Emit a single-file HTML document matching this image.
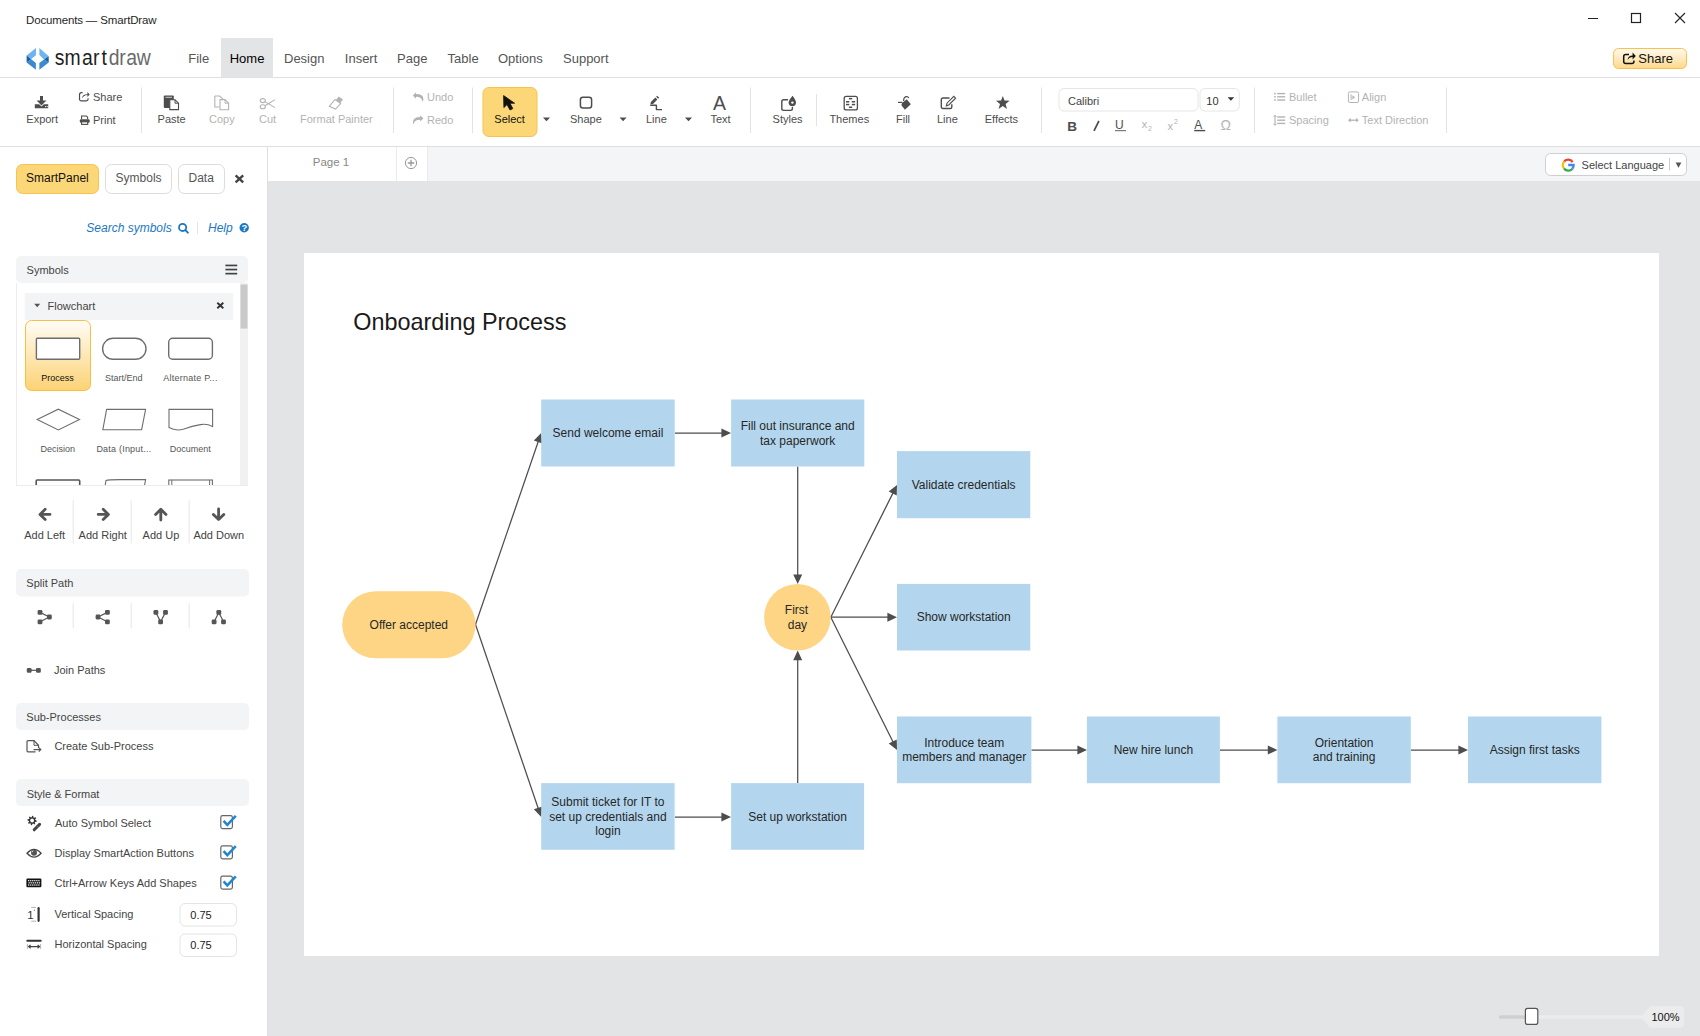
<!DOCTYPE html><html><head><meta charset="utf-8"><style>html,body{margin:0;padding:0;background:#fff;overflow:hidden}svg{display:block}text{font-family:"Liberation Sans",sans-serif}</style></head><body><svg width="1700" height="1036" viewBox="0 0 1700 1036"><rect x="0" y="0" width="1700" height="1036" fill="#ffffff" stroke="none" stroke-width="1" rx="0" />
<rect x="268" y="181" width="1432" height="855" fill="#e3e4e6" stroke="none" stroke-width="1" rx="0" />
<rect x="268" y="147" width="1432" height="34" fill="#f4f5f6" stroke="none" stroke-width="1" rx="0" />
<rect x="268" y="147" width="128" height="34" fill="#ffffff" stroke="none" stroke-width="1" rx="0" />
<rect x="397" y="147" width="30" height="34" fill="#ffffff" stroke="none" stroke-width="1" rx="0" />
<line x1="396.5" y1="147" x2="396.5" y2="181" stroke="#e9eaeb" stroke-width="1" />
<line x1="427.5" y1="147" x2="427.5" y2="181" stroke="#e9eaeb" stroke-width="1" />
<rect x="304" y="253" width="1355" height="703" fill="#ffffff" stroke="none" stroke-width="1" rx="0" />
<line x1="0" y1="77.5" x2="1700" y2="77.5" stroke="#dedfe0" stroke-width="1" />
<line x1="0" y1="146.5" x2="1700" y2="146.5" stroke="#dedfe0" stroke-width="1" />
<line x1="267.5" y1="147" x2="267.5" y2="1036" stroke="#dedfe0" stroke-width="1" />
<text x="26" y="24" font-size="11.5" fill="#1f1f1f" letter-spacing="-0.15" >Documents — SmartDraw</text>
<line x1="1588" y1="18.5" x2="1598" y2="18.5" stroke="#222" stroke-width="1" />
<rect x="1631.5" y="13.5" width="9" height="9" fill="none" stroke="#222" stroke-width="1.2" rx="0" />
<path d="M1675 13 L1685 23 M1685 13 L1675 23" fill="none" stroke="#222" stroke-width="1.1" />
<g>
<path d="M36.0 48.1 L26.6 55.6 L31.3 59.1 L35.9 55.3 Z" fill="#6db4f2" stroke="none" stroke-width="1" />
<path d="M26.6 55.6 L26.6 62.5 L31.3 59.2 Z" fill="#1b5c9e" stroke="none" stroke-width="1" />
<path d="M26.6 62.5 L35.9 69.8 L35.9 63.1 L31.3 59.2 Z" fill="#3a8ad0" stroke="none" stroke-width="1" />
<path d="M39.4 48.1 L48.7 56.2 L44.0 59.4 L39.4 55.0 Z" fill="#6db4f2" stroke="none" stroke-width="1" />
<path d="M48.7 56.2 L48.7 62.5 L44.0 59.4 Z" fill="#1b5c9e" stroke="none" stroke-width="1" />
<path d="M48.7 62.5 L39.4 69.8 L39.4 63.1 L44.0 59.4 Z" fill="#3a8ad0" stroke="none" stroke-width="1" />
</g>
<g transform="scale(0.88,1)"><text x="62.27 73.41 93.07 105.68 115.28" y="64.7" font-size="22" fill="#1e1e1e">smart</text>
<text x="123.68 135.57 143.41 155.53" y="64.7" font-size="22" fill="#6a6a6a">draw</text></g>
<rect x="221" y="38" width="52" height="39.5" fill="#e3e4e6" stroke="none" stroke-width="1" rx="0" />
<text x="188.2" y="63.2" font-size="13" fill="#555" >File</text>
<text x="229.7" y="63.2" font-size="13" fill="#000" >Home</text>
<text x="284.0" y="63.2" font-size="13" fill="#555" >Design</text>
<text x="344.8" y="63.2" font-size="13" fill="#555" >Insert</text>
<text x="397.09999999999997" y="63.2" font-size="13" fill="#555" >Page</text>
<text x="447.59999999999997" y="63.2" font-size="13" fill="#555" >Table</text>
<text x="498.0" y="63.2" font-size="13" fill="#555" >Options</text>
<text x="563.0" y="63.2" font-size="13" fill="#555" >Support</text>
<defs><linearGradient id="shg" x1="0" y1="0" x2="0" y2="1"><stop offset="0" stop-color="#fffaf0"/><stop offset="1" stop-color="#fcd98a"/></linearGradient><linearGradient id="procg" x1="0" y1="0" x2="0" y2="1"><stop offset="0" stop-color="#fffdf7"/><stop offset="1" stop-color="#fcd274"/></linearGradient></defs>
<rect x="1613.5" y="48.5" width="73" height="20" fill="url(#shg)" stroke="#f8c14e" stroke-width="1" rx="5" />
<text x="1638.3" y="63.3" font-size="13" fill="#111" >Share</text>
<line x1="141.5" y1="87.5" x2="141.5" y2="133" stroke="#e3e3e3" stroke-width="1" />
<line x1="393.5" y1="87.5" x2="393.5" y2="133" stroke="#e3e3e3" stroke-width="1" />
<line x1="472.5" y1="87.5" x2="472.5" y2="133" stroke="#e3e3e3" stroke-width="1" />
<line x1="750.5" y1="87.5" x2="750.5" y2="133" stroke="#e3e3e3" stroke-width="1" />
<line x1="1041.5" y1="87.5" x2="1041.5" y2="133" stroke="#e3e3e3" stroke-width="1" />
<line x1="1254.5" y1="87.5" x2="1254.5" y2="133" stroke="#e3e3e3" stroke-width="1" />
<line x1="1446.5" y1="87.5" x2="1446.5" y2="133" stroke="#e3e3e3" stroke-width="1" />
<line x1="816.5" y1="94" x2="816.5" y2="126" stroke="#e3e3e3" stroke-width="1" />
<text x="26.3" y="123.3" font-size="11" fill="#4d4d4d" >Export</text>
<path d="M40 96 h3 v4.6 h3.4 l-4.9 5 l-4.9 -5 h3.4 Z" fill="#4d4d4d" stroke="none" stroke-width="1" />
<path d="M34.8 104.2 h4.3 l2.4 2.4 l2.4 -2.4 h4.3 v4 h-13.4 Z" fill="#4d4d4d" stroke="none" stroke-width="1" />
<circle cx="45.6" cy="106.6" r="0.6" fill="#fff"/><circle cx="47.2" cy="106.6" r="0.6" fill="#fff"/>
<text x="93" y="100.8" font-size="11" fill="#4d4d4d" >Share</text>
<path d="M82.6 92.7 h-1.3 a1.8 1.8 0 0 0 -1.8 1.8 v4.6 a1.8 1.8 0 0 0 1.8 1.8 h5 a1.8 1.8 0 0 0 1.8 -1.8 v-0.8" fill="none" stroke="#4d4d4d" stroke-width="1.2" />
<path d="M82 98.6 q0 -4.4 5.4 -4.4 v-2.3 l2.3 2.6 l-2.3 2.6 v-2.2 q-3.6 0 -5.4 3.7 Z" fill="#4d4d4d" stroke="none" stroke-width="1" />
<text x="93" y="123.8" font-size="11" fill="#4d4d4d" >Print</text>
<path d="M81.6 119.2 v-3.2 h4.8 l1.2 1.2 v2" fill="none" stroke="#4d4d4d" stroke-width="1.1" />
<rect x="79.8" y="119.2" width="9.9" height="3.6" fill="#4d4d4d" stroke="none" stroke-width="1" rx="1.2" />
<rect x="81.6" y="121.8" width="6.1" height="2.6" fill="#fff" stroke="#4d4d4d" stroke-width="1.1" rx="0" />
<text x="157.6" y="123.3" font-size="11" fill="#4d4d4d" >Paste</text>
<rect x="163.8" y="95.6" width="10" height="12.4" fill="#4d4d4d" stroke="none" stroke-width="1" rx="1" />
<line x1="165.5" y1="97.3" x2="172" y2="97.3" stroke="#ddd" stroke-width="0.9" />
<path d="M169.8 99.7 h5.2 l3.5 3.5 v6.4 h-8.7 Z" fill="#fff" stroke="#4d4d4d" stroke-width="1.1" />
<path d="M175 99.7 v3.5 h3.5" fill="none" stroke="#4d4d4d" stroke-width="1" />
<text x="209" y="123.3" font-size="11" fill="#b3b3b3" >Copy</text>
<path d="M214.8 96 h5 l3.4 3.4 M214.8 96 v11 h4.5" fill="none" stroke="#b3b3b3" stroke-width="1.1" />
<path d="M214.8 96 l-0.01 0" fill="none" stroke="#b3b3b3" stroke-width="1" />
<path d="M220 99.6 h5 l3.6 3.6 v6.6 h-8.6 Z" fill="#fff" stroke="#b3b3b3" stroke-width="1.1" />
<path d="M225 99.6 v3.6 h3.6" fill="none" stroke="#b3b3b3" stroke-width="1" />
<text x="259" y="123.3" font-size="11" fill="#b3b3b3" >Cut</text>
<ellipse cx="262.8" cy="100.6" rx="2.6" ry="2" fill="none" stroke="#b3b3b3" stroke-width="1.1"/>
<ellipse cx="262.8" cy="106.8" rx="2.6" ry="2" fill="none" stroke="#b3b3b3" stroke-width="1.1"/>
<path d="M265 101.6 L275 107.6 M265 105.8 L275 99.6" fill="none" stroke="#b3b3b3" stroke-width="1.1" />
<text x="300" y="123.3" font-size="11" fill="#b3b3b3" >Format Painter</text>
<path d="M329.3 106.3 L335 99.5 L340.6 103.6 L335.6 109 Z" fill="none" stroke="#b3b3b3" stroke-width="1.1" />
<path d="M335.8 100 L338.8 96.6 L343 99.6 L340.3 103 Z" fill="#b3b3b3" stroke="none" stroke-width="1" />
<text x="427" y="100.8" font-size="11" fill="#b3b3b3" >Undo</text>
<text x="427" y="123.8" font-size="11" fill="#b3b3b3" >Redo</text>
<path d="M412.9 95.5 L415.9 92.3 V94.1 Q423.4 94.1 423.4 99 Q423.4 100.5 422.2 101.6 Q422 96.8 415.9 96.8 V98.7 Z" fill="#b3b3b3" stroke="none" stroke-width="1" />
<path d="M423.4 118.4 L420.2 115.2 V117 Q412.9 117 412.9 122.5 Q412.9 123.5 413.3 124.5 Q414 119.7 420.2 119.7 V121.6 Z" fill="#b3b3b3" stroke="none" stroke-width="1" />
<rect x="483" y="87.5" width="54" height="49" fill="#fcd778" stroke="#f8c24c" stroke-width="1" rx="6" />
<text x="494.3" y="123.3" font-size="11" fill="#111" >Select</text>
<path d="M503.6 95.6 L503.9 107.6 L507 104.6 L510 110 L512.8 108.6 L510 103.3 L514.6 103.2 Z" fill="#111" stroke="#111" stroke-width="0.8" stroke-linejoin="round"/>
<path d="M543 117.5 h7 l-3.5 3.8 Z" fill="#4d4d4d" stroke="none" stroke-width="1" />
<text x="570" y="123.3" font-size="11" fill="#4d4d4d" >Shape</text>
<rect x="580.4" y="97.3" width="11.2" height="10.6" fill="none" stroke="#4d4d4d" stroke-width="1.5" rx="2.5" />
<path d="M619.6 117.5 h7 l-3.5 3.8 Z" fill="#4d4d4d" stroke="none" stroke-width="1" />
<text x="646" y="123.3" font-size="11" fill="#4d4d4d" >Line</text>
<path d="M650.4 104.2 L650.9 101.9 L655.3 97.5 L657.4 99.6 L653 104 Z" fill="#4d4d4d" stroke="none" stroke-width="1" />
<path d="M656.1 96.7 L657.1 95.7 L659.2 97.8 L658.2 98.8 Z" fill="#4d4d4d" stroke="none" stroke-width="1" />
<path d="M650.2 105.3 H656.4 V109.6 H662" fill="none" stroke="#4d4d4d" stroke-width="1.4" stroke-linejoin="round"/>
<path d="M685 117.5 h7 l-3.5 3.8 Z" fill="#4d4d4d" stroke="none" stroke-width="1" />
<text x="710.5" y="123.3" font-size="11" fill="#4d4d4d" >Text</text>
<text x="713" y="110.3" font-size="19.5" fill="#4d4d4d" >A</text>
<text x="772.6" y="123.3" font-size="11" fill="#4d4d4d" >Styles</text>
<path d="M788 99.8 h-4.4 a1.8 1.8 0 0 0 -1.8 1.8 v7 a1.8 1.8 0 0 0 1.8 1.8 h7 a1.8 1.8 0 0 0 1.8 -1.8 v-1.8" fill="none" stroke="#4d4d4d" stroke-width="1.4" />
<path d="M792.6 95.8 q-4 4.8 -4 6.6 a3.7 3.7 0 0 0 7.4 0 q0 -1.8 -3.4 -6.6 Z" fill="#4d4d4d" stroke="none" stroke-width="1" />
<circle cx="792.4" cy="102.6" r="1.2" fill="#fff"/>
<text x="829.4" y="123.3" font-size="11" fill="#4d4d4d" >Themes</text>
<rect x="844.2" y="96.3" width="13.2" height="13.6" fill="none" stroke="#4d4d4d" stroke-width="1.3" rx="2" />
<rect x="848.9" y="97.9" width="3.3" height="1.5" fill="#4d4d4d" stroke="none" stroke-width="1" rx="0" />
<rect x="846" y="101" width="3.3" height="1.5" fill="#4d4d4d" stroke="none" stroke-width="1" rx="0" />
<rect x="851.8" y="101" width="3.3" height="1.5" fill="#4d4d4d" stroke="none" stroke-width="1" rx="0" />
<rect x="846" y="103.8" width="3.3" height="1.5" fill="#4d4d4d" stroke="none" stroke-width="1" rx="0" />
<rect x="851.8" y="103.8" width="3.3" height="1.5" fill="#4d4d4d" stroke="none" stroke-width="1" rx="0" />
<rect x="848.9" y="106.5" width="3.3" height="1.5" fill="#4d4d4d" stroke="none" stroke-width="1" rx="0" />
<text x="896" y="123.3" font-size="11" fill="#4d4d4d" >Fill</text>
<path d="M902 102.9 L906.8 99.2 L910.8 104.3 L904.9 109.7 L901.4 105.2 Z" fill="#4d4d4d" stroke="none" stroke-width="1" />
<path d="M903.6 101 Q903.6 96.4 907 96.6 Q908.4 96.8 908.8 98.2" fill="none" stroke="#4d4d4d" stroke-width="1.2" />
<path d="M898 102.4 H902.4" fill="none" stroke="#4d4d4d" stroke-width="1.2" />
<text x="937" y="123.3" font-size="11" fill="#4d4d4d" >Line</text>
<path d="M949.5 98 h-6.6 a1.6 1.6 0 0 0 -1.6 1.6 v7.3 a1.6 1.6 0 0 0 1.6 1.6 h7.3 a1.6 1.6 0 0 0 1.6 -1.6 v-2.6" fill="none" stroke="#4d4d4d" stroke-width="1.4" />
<path d="M946.3 105.8 L947 103.2 L953.8 96.4 L955.6 98.2 L948.8 105 Z" fill="#fff" stroke="#4d4d4d" stroke-width="1.1" />
<text x="984.7" y="123.3" font-size="11" fill="#4d4d4d" >Effects</text>
<path d="M1002.8 95.9 L1004.5 100.6 L1009.6 100.8 L1005.6 103.9 L1007 108.9 L1002.8 106 L998.6 108.9 L1000 103.9 L996 100.8 L1001.1 100.6 Z" fill="#4d4d4d" stroke="none" stroke-width="1" />
<rect x="1059" y="88.5" width="139" height="22.5" fill="#fff" stroke="#e6e6e6" stroke-width="1" rx="5" />
<rect x="1200" y="88.5" width="39.3" height="22.5" fill="#fff" stroke="#e6e6e6" stroke-width="1" rx="5" />
<text x="1068" y="104.6" font-size="11" fill="#444" >Calibri</text>
<text x="1206.3" y="104.6" font-size="11" fill="#333" >10</text>
<path d="M1227.6 97.3 h6.6 l-3.3 3.5 Z" fill="#333" stroke="none" stroke-width="1" />
<text x="1067.3" y="130.5" font-size="13.5" fill="#4d4d4d" font-weight="bold" >B</text>
<path d="M1098.9 121 L1094 130.9" fill="none" stroke="#4d4d4d" stroke-width="1.7" />
<text x="1115" y="128.6" font-size="12" fill="#4d4d4d" >U</text>
<line x1="1115" y1="130.7" x2="1126" y2="130.7" stroke="#4d4d4d" stroke-width="0.9" />
<text x="1141.8" y="128.4" font-size="11" fill="#b3b3b3" >x</text>
<text x="1148" y="130.6" font-size="7" fill="#b3b3b3" >2</text>
<text x="1167.5" y="130" font-size="11" fill="#b3b3b3" >x</text>
<text x="1174" y="124.3" font-size="7" fill="#b3b3b3" >2</text>
<text x="1194.3" y="128.6" font-size="12" fill="#4d4d4d" >A</text>
<line x1="1194.2" y1="130.6" x2="1205.2" y2="130.6" stroke="#4d4d4d" stroke-width="1.4" />
<text x="1220.5" y="130" font-size="14" fill="#b3b3b3" >Ω</text>
<text x="1289" y="101" font-size="11" fill="#b3b3b3" >Bullet</text>
<text x="1361.8" y="101" font-size="11" fill="#b3b3b3" >Align</text>
<text x="1289" y="123.9" font-size="11" fill="#b3b3b3" >Spacing</text>
<text x="1361.8" y="123.9" font-size="11" fill="#b3b3b3" >Text Direction</text>
<rect x="1274.2" y="92.8" width="1.6" height="1.6" fill="#b3b3b3" stroke="none" stroke-width="1" rx="0" />
<rect x="1277.2" y="92.89999999999999" width="8" height="1.4" fill="#b3b3b3" stroke="none" stroke-width="1" rx="0" />
<rect x="1274.2" y="96.0" width="1.6" height="1.6" fill="#b3b3b3" stroke="none" stroke-width="1" rx="0" />
<rect x="1277.2" y="96.1" width="8" height="1.4" fill="#b3b3b3" stroke="none" stroke-width="1" rx="0" />
<rect x="1274.2" y="99.2" width="1.6" height="1.6" fill="#b3b3b3" stroke="none" stroke-width="1" rx="0" />
<rect x="1277.2" y="99.3" width="8" height="1.4" fill="#b3b3b3" stroke="none" stroke-width="1" rx="0" />
<rect x="1348.4" y="91.9" width="10.2" height="10.6" fill="none" stroke="#b3b3b3" stroke-width="1" rx="1.5" />
<rect x="1350.6" y="94.3" width="1" height="5.8" fill="#b3b3b3" stroke="none" stroke-width="1" rx="0" />
<path d="M1352.4 95.2 v4.2 l2.6 -2.1 Z" fill="#b3b3b3" stroke="none" stroke-width="1" />
<rect x="1277.2" y="116.3" width="8" height="1.4" fill="#b3b3b3" stroke="none" stroke-width="1" rx="0" />
<rect x="1277.2" y="119.5" width="8" height="1.4" fill="#b3b3b3" stroke="none" stroke-width="1" rx="0" />
<rect x="1277.2" y="122.7" width="8" height="1.4" fill="#b3b3b3" stroke="none" stroke-width="1" rx="0" />
<path d="M1275 115.6 v9.4" fill="none" stroke="#b3b3b3" stroke-width="1.2" />
<path d="M1273.6 116.8 l1.4 -1.6 l1.4 1.6 M1273.6 123.8 l1.4 1.6 l1.4 -1.6" fill="none" stroke="#b3b3b3" stroke-width="1" />
<path d="M1349.6 120.2 h7.6" fill="none" stroke="#b3b3b3" stroke-width="1.3" />
<path d="M1348 120.2 l2.6 -2.4 v4.8 Z M1358.8 120.2 l-2.6 -2.4 v4.8 Z" fill="#b3b3b3" stroke="none" stroke-width="1" />
<path d="M1629 54.6 h-3.3 a2 2 0 0 0 -2 2 v5 a2 2 0 0 0 2 2 h6.2 a2 2 0 0 0 2 -2 v-1.2" fill="none" stroke="#111" stroke-width="1.5" />
<path d="M1627.6 60 q0.3 -4.6 5 -4.6 v-2.8 l3.2 3.5 l-3.2 3.5 v-2.6 q-3.3 0 -5 3 Z" fill="#111" stroke="none" stroke-width="1" />
<rect x="16.5" y="164.5" width="82" height="29" fill="#fcd778" stroke="#f8c24c" stroke-width="1" rx="6" />
<text x="26.1" y="182" font-size="12" fill="#111" >SmartPanel</text>
<rect x="105.5" y="164.5" width="66" height="29" fill="#fff" stroke="#dcdcdc" stroke-width="1" rx="6" />
<text x="115.6" y="182" font-size="12" fill="#555" >Symbols</text>
<rect x="178.5" y="164.5" width="46" height="29" fill="#fff" stroke="#dcdcdc" stroke-width="1" rx="6" />
<text x="188.5" y="182" font-size="12" fill="#555" >Data</text>
<path d="M235.6 175.4 L243.2 182.4 M243.2 175.4 L235.6 182.4" fill="none" stroke="#444" stroke-width="2.4" />
<text x="86.3" y="232" font-size="12" fill="#1a78c2" font-style="italic" >Search symbols</text>
<circle cx="182.6" cy="227.4" r="3.6" fill="none" stroke="#1a78c2" stroke-width="1.8"/>
<path d="M185.3 230.1 L187.9 232.6" fill="none" stroke="#1a78c2" stroke-width="2" stroke-linecap="round"/>
<line x1="197.5" y1="222" x2="197.5" y2="234" stroke="#e3e3e3" stroke-width="1" />
<text x="208" y="232" font-size="12" fill="#1a78c2" font-style="italic" >Help</text>
<circle cx="244.2" cy="227.7" r="4.7" fill="#1a78c2"/>
<text x="244.3" y="231.3" font-size="9.5" fill="#fff" font-weight="bold" text-anchor="middle" >?</text>
<rect x="16" y="256" width="232" height="27" fill="#f3f4f5" stroke="none" stroke-width="1" rx="5" />
<text x="26.6" y="274.3" font-size="11" fill="#444" >Symbols</text>
<rect x="225.4" y="264.59999999999997" width="11.8" height="1.7" fill="#444" stroke="none" stroke-width="1" rx="0" />
<rect x="225.4" y="268.7" width="11.8" height="1.7" fill="#444" stroke="none" stroke-width="1" rx="0" />
<rect x="225.4" y="272.8" width="11.8" height="1.7" fill="#444" stroke="none" stroke-width="1" rx="0" />
<line x1="16.5" y1="283" x2="16.5" y2="485" stroke="#ececec" stroke-width="1" />
<line x1="16" y1="485.5" x2="248" y2="485.5" stroke="#ececec" stroke-width="1" />
<rect x="240" y="283" width="8" height="202" fill="#f1f1f1" stroke="none" stroke-width="1" rx="0" />
<rect x="240.5" y="284.6" width="7" height="44" fill="#c9c9c9" stroke="none" stroke-width="1" rx="0" />
<rect x="24.7" y="293" width="208.5" height="27" fill="#f3f4f5" stroke="none" stroke-width="1" rx="0" />
<path d="M34.2 303.7 h6 l-3 3.6 Z" fill="#555" stroke="none" stroke-width="1" />
<text x="47.6" y="310.3" font-size="11" fill="#444" >Flowchart</text>
<path d="M217.3 302.8 L223.3 308.3 M223.3 302.8 L217.3 308.3" fill="none" stroke="#333" stroke-width="1.9" />
<rect x="25.5" y="320.5" width="65" height="70" fill="url(#procg)" stroke="#f9bf45" stroke-width="1" rx="6" />
<rect x="36.4" y="338.3" width="43.3" height="21" fill="#fff" stroke="#6e6e6e" stroke-width="1.4" rx="1" />
<rect x="102.6" y="338.3" width="43.4" height="21" fill="#fff" stroke="#6e6e6e" stroke-width="1.4" rx="10.5" />
<rect x="168.7" y="338.3" width="43.7" height="21" fill="#fff" stroke="#6e6e6e" stroke-width="1.4" rx="4" />
<text x="41.3" y="380.9" font-size="9" fill="#111" >Process</text>
<text x="105" y="380.9" font-size="9" fill="#555" >Start/End</text>
<text x="163.2" y="380.9" font-size="9" fill="#555" textLength="54.2">Alternate P...</text>
<path d="M37.2 419.5 L58.3 409.2 L79.5 419.5 L58.3 430 Z" fill="#fff" stroke="#6e6e6e" stroke-width="1.1" />
<path d="M106.6 409.4 L145.6 409.4 L141.6 429.8 L102.8 429.8 Z" fill="#fff" stroke="#6e6e6e" stroke-width="1.1" stroke-linejoin="round"/>
<path d="M169 409.4 H212.6 V426.6 Q207 423.4 200.5 424.6 Q192 426 184 429 Q176 431.4 169 427.6 Z" fill="#fff" stroke="#6e6e6e" stroke-width="1.1" />
<text x="40.5" y="452.4" font-size="9" fill="#555" >Decision</text>
<text x="96.4" y="452.4" font-size="9" fill="#555" textLength="54.8">Data (Input...</text>
<text x="169.7" y="452.4" font-size="9" fill="#555" >Document</text>
<clipPath id="lclip"><rect x="17" y="470" width="223" height="15"/></clipPath><g clip-path="url(#lclip)">
<rect x="36.2" y="480" width="43.5" height="22" fill="#fff" stroke="#555" stroke-width="1.6" rx="1" />
<path d="M106 480.4 Q108 479.6 120 479.6 H145.6 L141.8 500 H102.8 Z" fill="#fff" stroke="#6e6e6e" stroke-width="1.1" />
<rect x="168.8" y="480" width="43.6" height="21" fill="#fff" stroke="#6e6e6e" stroke-width="1.1" rx="0" />
<line x1="171.8" y1="480" x2="171.8" y2="500" stroke="#6e6e6e" stroke-width="1" />
<line x1="209.6" y1="480" x2="209.6" y2="500" stroke="#6e6e6e" stroke-width="1" />
</g>
<line x1="73.2" y1="500.3" x2="73.2" y2="543.4" stroke="#e6e6e6" stroke-width="1" />
<line x1="131.2" y1="500.3" x2="131.2" y2="543.4" stroke="#e6e6e6" stroke-width="1" />
<line x1="189.2" y1="500.3" x2="189.2" y2="543.4" stroke="#e6e6e6" stroke-width="1" />
<path d="M50 514.4 H40.2 M45.2 509.2 L40 514.4 L45.2 519.6" fill="none" stroke="#555" stroke-width="2.8" stroke-linejoin="round" stroke-linecap="round"/>
<path d="M98.2 514.4 H108.2 M103.2 509.2 L108.4 514.4 L103.2 519.6" fill="none" stroke="#555" stroke-width="2.8" stroke-linejoin="round" stroke-linecap="round"/>
<path d="M160.8 520 V509.4 M155.6 514.4 L160.8 509.2 L166 514.4" fill="none" stroke="#555" stroke-width="2.8" stroke-linejoin="round" stroke-linecap="round"/>
<path d="M218.6 508.8 V519.4 M213.4 514.4 L218.6 519.6 L223.8 514.4" fill="none" stroke="#555" stroke-width="2.8" stroke-linejoin="round" stroke-linecap="round"/>
<text x="24.2" y="538.5" font-size="11" fill="#444" >Add Left</text>
<text x="78.6" y="538.5" font-size="11" fill="#444" >Add Right</text>
<text x="142.6" y="538.5" font-size="11" fill="#444" >Add Up</text>
<text x="193.4" y="538.5" font-size="11" fill="#444" >Add Down</text>
<rect x="16" y="569" width="233" height="27.5" fill="#f3f4f5" stroke="none" stroke-width="1" rx="5" />
<text x="26.3" y="587.2" font-size="11" fill="#444" >Split Path</text>
<line x1="73.2" y1="603.3" x2="73.2" y2="628.3" stroke="#e6e6e6" stroke-width="1" />
<line x1="131.2" y1="603.3" x2="131.2" y2="628.3" stroke="#e6e6e6" stroke-width="1" />
<line x1="189.2" y1="603.3" x2="189.2" y2="628.3" stroke="#e6e6e6" stroke-width="1" />
<line x1="40" y1="612.4" x2="49.4" y2="617" stroke="#555" stroke-width="1.2" />
<line x1="40" y1="621.8" x2="49.4" y2="617" stroke="#555" stroke-width="1.2" />
<rect x="37.6" y="610.0" width="4.8" height="4.8" fill="#555" stroke="none" stroke-width="1" rx="1.3" />
<rect x="37.6" y="619.4" width="4.8" height="4.8" fill="#555" stroke="none" stroke-width="1" rx="1.3" />
<rect x="47.0" y="614.6" width="4.8" height="4.8" fill="#555" stroke="none" stroke-width="1" rx="1.3" />
<line x1="98" y1="617" x2="107.4" y2="612.4" stroke="#555" stroke-width="1.2" />
<line x1="98" y1="617" x2="107.4" y2="621.8" stroke="#555" stroke-width="1.2" />
<rect x="95.6" y="614.6" width="4.8" height="4.8" fill="#555" stroke="none" stroke-width="1" rx="1.3" />
<rect x="105.0" y="610.0" width="4.8" height="4.8" fill="#555" stroke="none" stroke-width="1" rx="1.3" />
<rect x="105.0" y="619.4" width="4.8" height="4.8" fill="#555" stroke="none" stroke-width="1" rx="1.3" />
<line x1="155.9" y1="612.4" x2="160.6" y2="621.8" stroke="#555" stroke-width="1.2" />
<line x1="165.5" y1="612.4" x2="160.6" y2="621.8" stroke="#555" stroke-width="1.2" />
<rect x="153.5" y="610.0" width="4.8" height="4.8" fill="#555" stroke="none" stroke-width="1" rx="1.3" />
<rect x="163.1" y="610.0" width="4.8" height="4.8" fill="#555" stroke="none" stroke-width="1" rx="1.3" />
<rect x="158.2" y="619.4" width="4.8" height="4.8" fill="#555" stroke="none" stroke-width="1" rx="1.3" />
<line x1="218.8" y1="612.4" x2="214.1" y2="621.8" stroke="#555" stroke-width="1.2" />
<line x1="218.8" y1="612.4" x2="223.5" y2="621.8" stroke="#555" stroke-width="1.2" />
<rect x="216.4" y="610.0" width="4.8" height="4.8" fill="#555" stroke="none" stroke-width="1" rx="1.3" />
<rect x="211.7" y="619.4" width="4.8" height="4.8" fill="#555" stroke="none" stroke-width="1" rx="1.3" />
<rect x="221.1" y="619.4" width="4.8" height="4.8" fill="#555" stroke="none" stroke-width="1" rx="1.3" />
<line x1="29.2" y1="670.3" x2="38.4" y2="670.3" stroke="#555" stroke-width="1.2" />
<rect x="26.8" y="667.9" width="4.8" height="4.8" fill="#555" stroke="none" stroke-width="1" rx="1.3" />
<rect x="36.0" y="667.9" width="4.8" height="4.8" fill="#555" stroke="none" stroke-width="1" rx="1.3" />
<text x="54" y="673.6" font-size="11" fill="#444" >Join Paths</text>
<rect x="16" y="703" width="233" height="27" fill="#f3f4f5" stroke="none" stroke-width="1" rx="5" />
<text x="26.3" y="720.6" font-size="11" fill="#444" >Sub-Processes</text>
<path d="M35.5 751.8 H28 a1 1 0 0 1 -1 -1 V741.6 a1 1 0 0 1 1 -1 H34 L38.5 745.3 V748" fill="none" stroke="#555" stroke-width="1.2" />
<path d="M34 740.6 V745.3 H38.5" fill="none" stroke="#555" stroke-width="1" />
<path d="M33.5 749.6 H40.6 M38.8 747.6 L40.8 749.6 L38.8 751.6" fill="none" stroke="#555" stroke-width="1.2" />
<text x="54.4" y="750.4" font-size="11" fill="#444" >Create Sub-Process</text>
<rect x="16" y="779" width="233" height="27" fill="#f3f4f5" stroke="none" stroke-width="1" rx="5" />
<text x="26.7" y="798" font-size="11" fill="#444" >Style &amp; Format</text>
<path d="M31.62 817.24 L32.33 815.81 L33.24 815.94 L33.51 817.52 L34.07 817.85 L35.58 817.34 L36.13 818.08 L35.21 819.39 L35.36 820.02 L36.79 820.73 L36.66 821.64 L35.08 821.91 L34.75 822.47 L35.26 823.98 L34.52 824.53 L33.21 823.61 L32.58 823.76 L31.87 825.19 L30.96 825.06 L30.69 823.48 L30.13 823.15 L28.62 823.66 L28.07 822.92 L28.99 821.61 L28.84 820.98 L27.41 820.27 L27.54 819.36 L29.12 819.09 L29.45 818.53 L28.94 817.02 L29.68 816.47 L30.99 817.39 Z" fill="#333" stroke="none" stroke-width="1" />
<circle cx="32.1" cy="820.5" r="1.9" fill="#fff"/>
<path d="M34.2 829.8 L39.6 824.4" fill="none" stroke="#444" stroke-width="3" stroke-linecap="round"/>
<path d="M37.6 826.4 L38.4 827.2" fill="none" stroke="#fff" stroke-width="0.5" />
<path d="M27 853.2 Q34 845.4 41.1 853.2 Q34 861 27 853.2 Z" fill="none" stroke="#444" stroke-width="1.3" />
<circle cx="34" cy="852.8" r="3" fill="#555"/>
<path d="M33 850.6 L32.2 852.2" fill="none" stroke="#eee" stroke-width="0.9" />
<rect x="26.4" y="878.5" width="15" height="8.8" fill="#111" stroke="none" stroke-width="1" rx="1.2" />
<rect x="28.0" y="880.0" width="1.3" height="1.3" fill="#e8e8e8" stroke="none" stroke-width="1" rx="0" />
<rect x="30.05" y="880.0" width="1.3" height="1.3" fill="#e8e8e8" stroke="none" stroke-width="1" rx="0" />
<rect x="32.1" y="880.0" width="1.3" height="1.3" fill="#e8e8e8" stroke="none" stroke-width="1" rx="0" />
<rect x="34.15" y="880.0" width="1.3" height="1.3" fill="#e8e8e8" stroke="none" stroke-width="1" rx="0" />
<rect x="36.2" y="880.0" width="1.3" height="1.3" fill="#e8e8e8" stroke="none" stroke-width="1" rx="0" />
<rect x="38.25" y="880.0" width="1.3" height="1.3" fill="#e8e8e8" stroke="none" stroke-width="1" rx="0" />
<rect x="28.5" y="882.2" width="1.3" height="1.3" fill="#e8e8e8" stroke="none" stroke-width="1" rx="0" />
<rect x="30.55" y="882.2" width="1.3" height="1.3" fill="#e8e8e8" stroke="none" stroke-width="1" rx="0" />
<rect x="32.6" y="882.2" width="1.3" height="1.3" fill="#e8e8e8" stroke="none" stroke-width="1" rx="0" />
<rect x="34.65" y="882.2" width="1.3" height="1.3" fill="#e8e8e8" stroke="none" stroke-width="1" rx="0" />
<rect x="36.7" y="882.2" width="1.3" height="1.3" fill="#e8e8e8" stroke="none" stroke-width="1" rx="0" />
<rect x="38.75" y="882.2" width="1.3" height="1.3" fill="#e8e8e8" stroke="none" stroke-width="1" rx="0" />
<rect x="28.0" y="884.4" width="1.3" height="1.3" fill="#e8e8e8" stroke="none" stroke-width="1" rx="0" />
<rect x="30.05" y="884.4" width="1.3" height="1.3" fill="#e8e8e8" stroke="none" stroke-width="1" rx="0" />
<rect x="32.1" y="884.4" width="1.3" height="1.3" fill="#e8e8e8" stroke="none" stroke-width="1" rx="0" />
<rect x="34.15" y="884.4" width="1.3" height="1.3" fill="#e8e8e8" stroke="none" stroke-width="1" rx="0" />
<rect x="36.2" y="884.4" width="1.3" height="1.3" fill="#e8e8e8" stroke="none" stroke-width="1" rx="0" />
<rect x="38.25" y="884.4" width="1.3" height="1.3" fill="#e8e8e8" stroke="none" stroke-width="1" rx="0" />
<text x="27.2" y="918.6" font-size="11.5" fill="#333" >1</text>
<line x1="38.6" y1="908.2" x2="38.6" y2="920.8" stroke="#333" stroke-width="2.2" stroke-linecap="round"/>
<line x1="31.2" y1="907.4" x2="36" y2="907.4" stroke="#aaa" stroke-width="0.9" />
<line x1="31.2" y1="921.2" x2="36" y2="921.2" stroke="#aaa" stroke-width="0.9" />
<rect x="33.8" y="909.6" width="1.2" height="1.2" fill="#888" stroke="none" stroke-width="1" rx="0" />
<line x1="27.3" y1="940.7" x2="40.7" y2="940.7" stroke="#333" stroke-width="2" stroke-linecap="round"/>
<path d="M28.6 946.6 H39.6 M30.6 945 L28.6 946.6 L30.6 948.2 M37.6 945 L39.6 946.6 L37.6 948.2" fill="none" stroke="#444" stroke-width="1.1" />
<line x1="27.4" y1="944" x2="27.4" y2="949" stroke="#999" stroke-width="0.7" />
<line x1="40.6" y1="944" x2="40.6" y2="949" stroke="#999" stroke-width="0.7" />
<text x="55" y="826.7" font-size="11" fill="#444" >Auto Symbol Select</text>
<text x="54.5" y="857.0" font-size="11" fill="#444" >Display SmartAction Buttons</text>
<text x="54.5" y="887.0" font-size="11" fill="#444" >Ctrl+Arrow Keys Add Shapes</text>
<text x="54.5" y="917.5" font-size="11" fill="#444" >Vertical Spacing</text>
<text x="54.5" y="947.8" font-size="11" fill="#444" >Horizontal Spacing</text>
<rect x="220.8" y="815.6" width="11.6" height="13" fill="#fff" stroke="#666" stroke-width="1.2" rx="1.8" />
<path d="M223.6 820.8 L227.3 824.8 L235.8 815.8" fill="none" stroke="#2286cf" stroke-width="2.6" stroke-linejoin="miter"/>
<rect x="220.8" y="845.9" width="11.6" height="13" fill="#fff" stroke="#666" stroke-width="1.2" rx="1.8" />
<path d="M223.6 851.0999999999999 L227.3 855.0999999999999 L235.8 846.0999999999999" fill="none" stroke="#2286cf" stroke-width="2.6" stroke-linejoin="miter"/>
<rect x="220.8" y="876.1" width="11.6" height="13" fill="#fff" stroke="#666" stroke-width="1.2" rx="1.8" />
<path d="M223.6 881.3 L227.3 885.3 L235.8 876.3" fill="none" stroke="#2286cf" stroke-width="2.6" stroke-linejoin="miter"/>
<rect x="180" y="903.5" width="56.5" height="22.5" fill="#fff" stroke="#e4e4e4" stroke-width="1" rx="5" />
<rect x="180" y="934" width="56.5" height="22.5" fill="#fff" stroke="#e4e4e4" stroke-width="1" rx="5" />
<text x="190.3" y="919" font-size="11" fill="#222" >0.75</text>
<text x="190.3" y="949.3" font-size="11" fill="#222" >0.75</text>
<text x="312.8" y="166.3" font-size="11.5" fill="#888" >Page 1</text>
<circle cx="411" cy="163" r="5.6" fill="none" stroke="#999" stroke-width="1"/>
<path d="M407.8 163 H414.2 M411 159.8 V166.2" fill="none" stroke="#999" stroke-width="1.3" />
<rect x="1545.5" y="153.5" width="141" height="22" fill="#fff" stroke="#cfcfcf" stroke-width="1" rx="5" />
<text x="1581.6" y="168.6" font-size="11" fill="#444" >Select Language</text>
<line x1="1669.5" y1="158" x2="1669.5" y2="170.5" stroke="#ccc" stroke-width="1" />
<path d="M1675.6 162.6 h5.8 l-2.9 5.2 Z" fill="#555" stroke="none" stroke-width="1" />
<g fill="none" stroke-width="2.3"><path d="M1572.6 162.1 A5.2 5.2 0 0 0 1564.2 161.6" stroke="#ea4335"/><path d="M1564.2 161.6 A5.2 5.2 0 0 0 1564.1 168.5" stroke="#fbbc05"/><path d="M1564.1 168.5 A5.2 5.2 0 0 0 1572.4 168.7" stroke="#34a853"/><path d="M1572.4 168.7 A5.2 5.2 0 0 0 1573.6 165 H1568.2" stroke="#4285f4"/></g>
<line x1="1500.5" y1="1017" x2="1532" y2="1017" stroke="#cfcfd0" stroke-width="3.4" stroke-linecap="round"/>
<line x1="1532" y1="1017" x2="1642" y2="1017" stroke="#ececed" stroke-width="3.4" />
<path d="M1641 1017 L1650 1006.3 H1680 a4 4 0 0 1 4 4 V1023.8 a4 4 0 0 1 -4 4 H1650 Z" fill="#ececed" stroke="none" stroke-width="1" />
<rect x="1525.4" y="1008.4" width="12.4" height="16" fill="#fff" stroke="#555" stroke-width="1.2" rx="2.2" />
<text x="1651.5" y="1021" font-size="11" fill="#111" >100%</text>
<text x="353.2" y="330.3" font-size="23.4" fill="#1a1a1a" >Onboarding Process</text>
<line x1="475.5" y1="624.5" x2="538.6038901053131" y2="440.56704786655325" stroke="#4d4d4d" stroke-width="1.25" />
<path d="M541.20 433.00 L542.34 443.54 L533.83 440.62 Z" fill="#4d4d4d" stroke="none" stroke-width="1" />
<line x1="475.5" y1="624.5" x2="538.6159660541966" y2="809.4288198696019" stroke="#4d4d4d" stroke-width="1.25" />
<path d="M541.20 817.00 L533.84 809.37 L542.36 806.46 Z" fill="#4d4d4d" stroke="none" stroke-width="1" />
<line x1="675" y1="433" x2="723.0" y2="433.0" stroke="#4d4d4d" stroke-width="1.25" />
<path d="M731.00 433.00 L721.40 437.50 L721.40 428.50 Z" fill="#4d4d4d" stroke="none" stroke-width="1" />
<line x1="797.7" y1="466.5" x2="797.7" y2="576.0" stroke="#4d4d4d" stroke-width="1.25" />
<path d="M797.70 584.00 L793.20 574.40 L802.20 574.40 Z" fill="#4d4d4d" stroke="none" stroke-width="1" />
<line x1="675" y1="817" x2="723.0" y2="817.0" stroke="#4d4d4d" stroke-width="1.25" />
<path d="M731.00 817.00 L721.40 821.50 L721.40 812.50 Z" fill="#4d4d4d" stroke="none" stroke-width="1" />
<line x1="797.7" y1="783" x2="797.7" y2="658.6" stroke="#4d4d4d" stroke-width="1.25" />
<path d="M797.70 650.60 L802.20 660.20 L793.20 660.20 Z" fill="#4d4d4d" stroke="none" stroke-width="1" />
<line x1="830.8" y1="617.2" x2="893.4179631452366" y2="492.15325184591717" stroke="#4d4d4d" stroke-width="1.25" />
<path d="M897.00 485.00 L896.73 495.60 L888.68 491.57 Z" fill="#4d4d4d" stroke="none" stroke-width="1" />
<line x1="830.8" y1="617.2" x2="889.0" y2="617.2" stroke="#4d4d4d" stroke-width="1.25" />
<path d="M897.00 617.20 L887.40 621.70 L887.40 612.70 Z" fill="#4d4d4d" stroke="none" stroke-width="1" />
<line x1="830.8" y1="617.2" x2="893.430920011011" y2="742.8402745840222" stroke="#4d4d4d" stroke-width="1.25" />
<path d="M897.00 750.00 L888.69 743.42 L896.74 739.40 Z" fill="#4d4d4d" stroke="none" stroke-width="1" />
<line x1="1031.4" y1="750" x2="1079.0" y2="750.0" stroke="#4d4d4d" stroke-width="1.25" />
<path d="M1087.00 750.00 L1077.40 754.50 L1077.40 745.50 Z" fill="#4d4d4d" stroke="none" stroke-width="1" />
<line x1="1220" y1="750" x2="1269.4" y2="750.0" stroke="#4d4d4d" stroke-width="1.25" />
<path d="M1277.40 750.00 L1267.80 754.50 L1267.80 745.50 Z" fill="#4d4d4d" stroke="none" stroke-width="1" />
<line x1="1410.8" y1="750" x2="1460.0" y2="750.0" stroke="#4d4d4d" stroke-width="1.25" />
<path d="M1468.00 750.00 L1458.40 754.50 L1458.40 745.50 Z" fill="#4d4d4d" stroke="none" stroke-width="1" />
<rect x="342.2" y="591.2" width="133.3" height="67" fill="#fdd585" stroke="none" stroke-width="1" rx="33.5" />
<text x="408.8" y="628.7" font-size="12" fill="#272727" text-anchor="middle" >Offer accepted</text>
<circle cx="797.4" cy="617.2" r="33.3" fill="#fdd585"/>
<text x="796.5" y="614.3" font-size="12" fill="#272727" text-anchor="middle" >First</text>
<text x="797.4" y="628.8" font-size="12" fill="#272727" text-anchor="middle" >day</text>
<rect x="541.2" y="399.5" width="133.5" height="67.0" fill="#b3d6ee" stroke="none" stroke-width="1" rx="0" />
<text x="607.95" y="437" font-size="12" fill="#272727" text-anchor="middle" >Send welcome email</text>
<rect x="731.1" y="399.5" width="133.19999999999993" height="67.0" fill="#b3d6ee" stroke="none" stroke-width="1" rx="0" />
<text x="797.7" y="430" font-size="12" fill="#272727" text-anchor="middle" >Fill out insurance and</text>
<text x="797.7" y="444.6" font-size="12" fill="#272727" text-anchor="middle" >tax paperwork</text>
<rect x="897" y="451.1" width="133.29999999999995" height="67.10000000000002" fill="#b3d6ee" stroke="none" stroke-width="1" rx="0" />
<text x="963.65" y="488.8" font-size="12" fill="#272727" text-anchor="middle" >Validate credentials</text>
<rect x="897" y="583.9" width="133.29999999999995" height="66.60000000000002" fill="#b3d6ee" stroke="none" stroke-width="1" rx="0" />
<text x="963.65" y="621.3" font-size="12" fill="#272727" text-anchor="middle" >Show workstation</text>
<rect x="897" y="716.5" width="134.4000000000001" height="66.70000000000005" fill="#b3d6ee" stroke="none" stroke-width="1" rx="0" />
<text x="964.2" y="746.8" font-size="12" fill="#272727" text-anchor="middle" >Introduce team</text>
<text x="964.2" y="761.4" font-size="12" fill="#272727" text-anchor="middle" >members and manager</text>
<rect x="1086.9" y="716.5" width="133.0" height="66.70000000000005" fill="#b3d6ee" stroke="none" stroke-width="1" rx="0" />
<text x="1153.4" y="754.2" font-size="12" fill="#272727" text-anchor="middle" >New hire lunch</text>
<rect x="1277.4" y="716.5" width="133.39999999999986" height="66.70000000000005" fill="#b3d6ee" stroke="none" stroke-width="1" rx="0" />
<text x="1344.1" y="746.8" font-size="12" fill="#272727" text-anchor="middle" >Orientation</text>
<text x="1344.1" y="761.4" font-size="12" fill="#272727" text-anchor="middle" >and training</text>
<rect x="1468" y="716.5" width="133.4000000000001" height="66.70000000000005" fill="#b3d6ee" stroke="none" stroke-width="1" rx="0" />
<text x="1534.7" y="754.2" font-size="12" fill="#272727" text-anchor="middle" >Assign first tasks</text>
<rect x="541.2" y="783.1" width="133.39999999999998" height="66.69999999999993" fill="#b3d6ee" stroke="none" stroke-width="1" rx="0" />
<text x="607.9000000000001" y="806" font-size="12" fill="#272727" text-anchor="middle" >Submit ticket for IT to</text>
<text x="607.9000000000001" y="820.6" font-size="12" fill="#272727" text-anchor="middle" >set up credentials and</text>
<text x="607.9000000000001" y="835.2" font-size="12" fill="#272727" text-anchor="middle" >login</text>
<rect x="731.1" y="783.1" width="133.0" height="66.69999999999993" fill="#b3d6ee" stroke="none" stroke-width="1" rx="0" />
<text x="797.6" y="820.6" font-size="12" fill="#272727" text-anchor="middle" >Set up workstation</text></svg></body></html>
